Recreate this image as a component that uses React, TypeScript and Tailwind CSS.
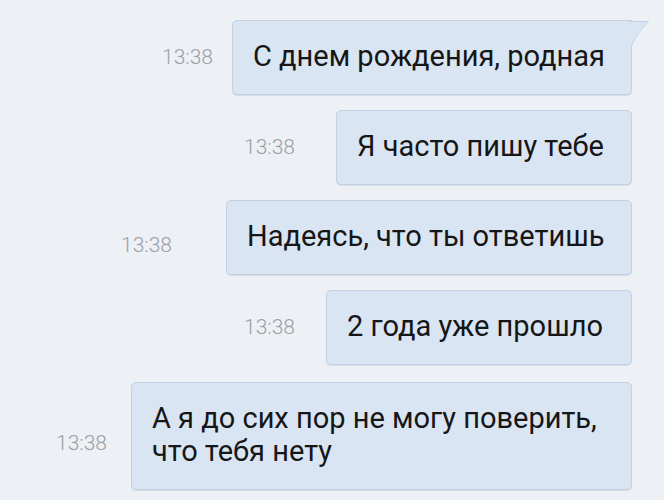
const messages = [
  { text: "С днем рождения, родная", width: "w-[400px]", timeGap: "mr-[19px]", timeShift: "mt-0", top: "mt-[20px]", tail: true },
  { text: "Я часто пишу тебе", width: "w-[296px]", timeGap: "mr-[41px]", timeShift: "mt-0", top: "mt-[15px]", tail: false },
  { text: "Надеясь, что ты ответишь", width: "w-[406px]", timeGap: "mr-[54px]", timeShift: "mt-[16px]", top: "mt-[15px]", tail: false },
  { text: "2 года уже прошло", width: "w-[306px]", timeGap: "mr-[31px]", timeShift: "mt-0", top: "mt-[15px]", tail: false },
  { text: "А я до сих пор не могу поверить, что тебя нету", width: "w-[501px]", timeGap: "mr-[24px]", timeShift: "mt-[14px]", top: "mt-[17px]", tail: false },
];

const Tail = () => (
  <svg
    className="absolute top-0 left-[calc(100%-2px)]"
    width="22"
    height="30"
    viewBox="0 0 22 30"
  >
    <path
      d="M0 0.5 H19.5 Q 9 11 3.5 22 Q 2.2 25 2 30 H0 Z"
      fill="#d9e5f3"
    />
    <path
      d="M0 0.5 H19.5 Q 9 11 3.5 22 Q 2.2 25 2 30"
      fill="none"
      stroke="#c3d1e2"
      strokeWidth="1"
    />
  </svg>
);

export default function App() {
  return (
    <div
      className="w-[664px] h-[500px] overflow-hidden bg-[#edf0f4] pr-[32px]"
      style={{ fontFamily: "Roboto, 'Noto Sans', sans-serif" }}
    >
      {messages.map((m, i) => (
        <div key={i} className={`flex justify-end items-center ${m.top}`}>
          <span
            className={`text-[21px] font-light leading-none text-[#9aa0a8] ${m.timeGap} ${m.timeShift}`}
          >
            13:38
          </span>
          <div
            className={`relative ${m.width} ${m.tail ? "rounded-[5px] rounded-tr-none" : "rounded-[5px]"} border border-[#c3d1e2] bg-[#d9e5f3] pl-[20px] pr-[14px] pt-[19px] pb-[21px] text-[29px] leading-[33px] text-[#161616] shadow-[0_1px_0_rgba(150,165,185,0.25)]`}
          >
            {m.text}
            {m.tail && <Tail />}
          </div>
        </div>
      ))}
    </div>
  );
}
